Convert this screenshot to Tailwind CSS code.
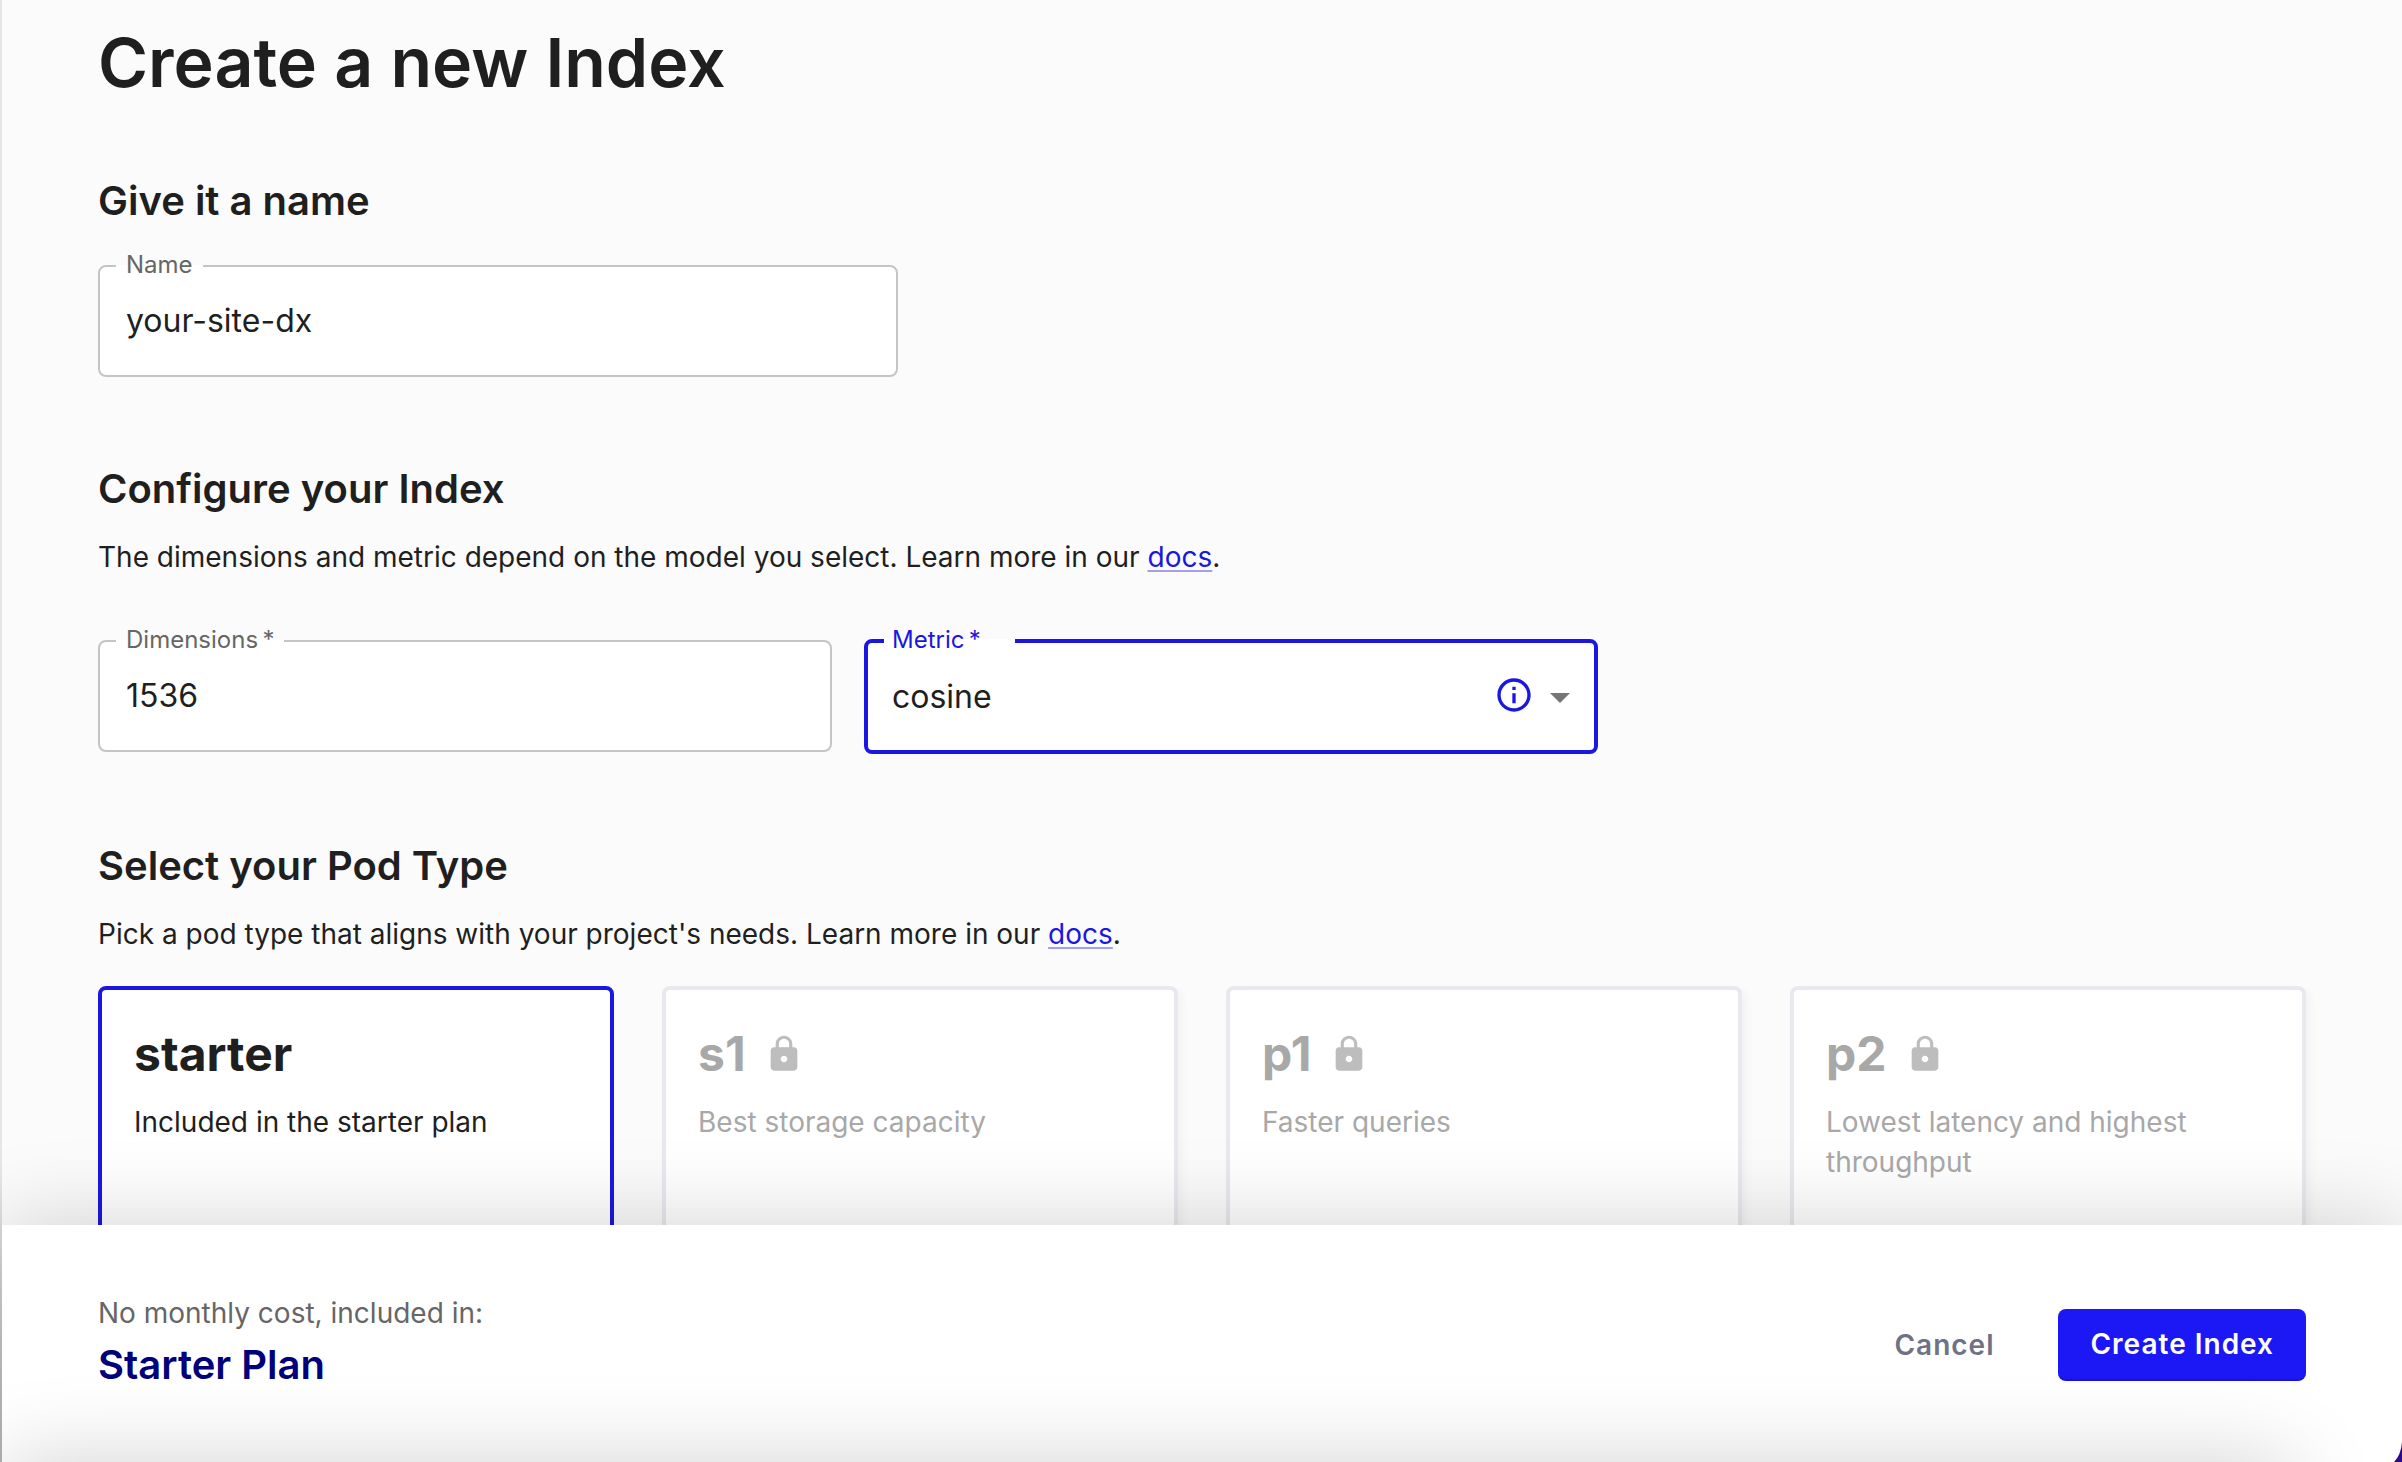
<!DOCTYPE html>
<html lang="en">
<head>
<meta charset="utf-8">
<title>Create a new Index</title>
<script src="https://cdn.jsdelivr.net/npm/@tailwindcss/browser@4"></script>
</head>
<body class="flex h-screen overflow-hidden bg-[#fbfbfb] font-['Inter',sans-serif] text-[28px] leading-10 text-[#1f1f1f]">
  <div class="w-0.5 shrink-0 bg-linear-to-b from-[#e6e6e6] from-80% to-[#b4b4b4]"></div>
  <div class="relative flex min-w-0 flex-1 flex-col">
    <main class="min-h-0 flex-1 overflow-hidden px-24 pt-[22px]">
      <h1 class="text-[68px] leading-20 font-semibold">Create a new Index</h1>

      <section class="mt-[75px]">
        <h2 class="text-[40px] leading-12 font-semibold">Give it a name</h2>
        <fieldset class="mt-[27px] w-[800px] max-w-full rounded-lg border-2 border-[#c4c4c4] bg-white pb-[15px]">
          <legend class="ml-4 px-2.5 pb-0.5 text-2xl leading-[26px] text-[#666]"><label for="name">Name</label></legend>
          <input id="name" type="text" value="your-site-dx" class="block h-20 w-full px-[26px] text-[32px] outline-none">
        </fieldset>
      </section>

      <section class="mt-[88px]">
        <h2 class="text-[40px] leading-12 font-semibold">Configure your Index</h2>
        <p class="mt-6">The dimensions and metric depend on the model you select. Learn more in our <a href="#" class="text-[#1c17e0] underline decoration-[#1c17e0]/40 decoration-2 underline-offset-3">docs</a>.</p>
        <div class="mt-[50px] flex items-start gap-8">
          <fieldset class="w-[734px] rounded-lg border-2 border-[#c4c4c4] bg-white pb-[15px]">
            <legend class="ml-4 px-2.5 pb-0.5 text-2xl leading-[26px] text-[#666]"><label for="dimensions">Dimensions&thinsp;*</label></legend>
            <input id="dimensions" type="text" value="1536" class="block h-20 w-full px-[26px] text-[32px] outline-none">
          </fieldset>
          <fieldset class="w-[734px] rounded-lg border-4 border-[#1c17e0] bg-white pb-[15px]">
            <legend class="ml-4 min-w-[131px] px-2 pb-0.5 text-2xl leading-[26px] text-[#1c17e0]"><label for="metric">Metric&thinsp;*</label></legend>
            <div class="relative">
              <select id="metric" class="block h-20 w-full appearance-none px-6 pt-1 text-[32px] outline-none"><option>cosine</option></select>
              <div class="pointer-events-none absolute inset-y-0 right-2.5 flex items-center gap-0.5">
                <svg class="size-10 text-[#1c17e0]" viewBox="0 0 24 24" fill="currentColor"><path d="M11 7h2v2h-2zm0 4h2v6h-2zm1-9C6.480 2 2 6.480 2 12s4.480 10 10 10 10-4.480 10-10S17.520 2 12 2zm0 18c-4.410 0-8-3.590-8-8s3.590-8 8-8 8 3.590 8 8-3.590 8-8 8z"/></svg>
                <svg class="size-12 text-[#757575]" viewBox="0 0 24 24" fill="currentColor"><path d="M7 11l5 5 5-5z"/></svg>
              </div>
            </div>
          </fieldset>
        </div>
      </section>

      <section class="mt-[88px]">
        <h2 class="text-[40px] leading-12 font-semibold">Select your Pod Type</h2>
        <p class="mt-6">Pick a pod type that aligns with your project's needs. Learn more in our <a href="#" class="text-[#1c17e0] underline decoration-[#1c17e0]/40 decoration-2 underline-offset-3">docs</a>.</p>
        <div class="mt-8 grid grid-cols-4 gap-12">
          <article class="h-80 rounded-lg border-4 border-[#1c17e0] bg-white px-8 pt-9">
            <h3 class="text-5xl leading-14 font-bold">starter</h3>
            <p class="mt-5">Included in the starter plan</p>
          </article>
          <article class="h-80 rounded-lg border-4 border-[#e8e8ee] bg-white px-8 pt-9 text-[#a8a8a8] shadow-[4px_4px_8px_rgba(0,0,0,0.04)]">
            <h3 class="flex items-center gap-[18px] text-5xl leading-14 font-bold">s1
              <svg class="size-10 text-[#bdbdbd]" viewBox="0 0 24 24" fill="currentColor"><path d="M18 8h-1V6c0-2.760-2.240-5-5-5S7 3.240 7 6v2H6c-1.100 0-2 .9-2 2v10c0 1.100.9 2 2 2h12c1.100 0 2-.9 2-2V10c0-1.100-.9-2-2-2zm-6 9c-1.100 0-2-.9-2-2s.9-2 2-2 2 .9 2 2-.9 2-2 2zm3.100-9H8.900V6c0-1.710 1.390-3.100 3.100-3.100s3.100 1.390 3.100 3.100v2z"/></svg>
            </h3>
            <p class="mt-5">Best storage capacity</p>
          </article>
          <article class="h-80 rounded-lg border-4 border-[#e8e8ee] bg-white px-8 pt-9 text-[#a8a8a8] shadow-[4px_4px_8px_rgba(0,0,0,0.04)]">
            <h3 class="flex items-center gap-[18px] text-5xl leading-14 font-bold">p1
              <svg class="size-10 text-[#bdbdbd]" viewBox="0 0 24 24" fill="currentColor"><path d="M18 8h-1V6c0-2.760-2.240-5-5-5S7 3.240 7 6v2H6c-1.100 0-2 .9-2 2v10c0 1.100.9 2 2 2h12c1.100 0 2-.9 2-2V10c0-1.100-.9-2-2-2zm-6 9c-1.100 0-2-.9-2-2s.9-2 2-2 2 .9 2 2-.9 2-2 2zm3.100-9H8.900V6c0-1.710 1.390-3.100 3.100-3.100s3.100 1.390 3.100 3.100v2z"/></svg>
            </h3>
            <p class="mt-5">Faster queries</p>
          </article>
          <article class="h-80 rounded-lg border-4 border-[#e8e8ee] bg-white px-8 pt-9 text-[#a8a8a8] shadow-[4px_4px_8px_rgba(0,0,0,0.04)]">
            <h3 class="flex items-center gap-[18px] text-5xl leading-14 font-bold">p2
              <svg class="size-10 text-[#bdbdbd]" viewBox="0 0 24 24" fill="currentColor"><path d="M18 8h-1V6c0-2.760-2.240-5-5-5S7 3.240 7 6v2H6c-1.100 0-2 .9-2 2v10c0 1.100.9 2 2 2h12c1.100 0 2-.9 2-2V10c0-1.100-.9-2-2-2zm-6 9c-1.100 0-2-.9-2-2s.9-2 2-2 2 .9 2 2-.9 2-2 2zm3.100-9H8.900V6c0-1.710 1.390-3.100 3.100-3.100s3.100 1.390 3.100 3.100v2z"/></svg>
            </h3>
            <p class="mt-5">Lowest latency and highest throughput</p>
          </article>
        </div>
      </section>
    </main>

    <footer class="relative z-10 flex shrink-0 items-start justify-between overflow-hidden bg-white px-24 pt-[68px] pb-[73px] shadow-[0_0_88px_rgba(0,0,0,0.18)]">
      <div>
        <p class="text-[#666]">No monthly cost, included in:</p>
        <p class="mt-2 text-[40px] leading-12 font-semibold text-[#00007c]">Starter Plan</p>
      </div>
      <div class="mt-4 flex items-center gap-8">
        <button type="button" class="h-18 px-8 font-semibold tracking-[1px] text-[#6f7285]">Cancel</button>
        <button type="button" class="h-18 rounded-lg border-b-2 border-[#1813d6] bg-[#1c17f5] px-8 font-semibold tracking-[1px] text-white">Create Index</button>
      </div>
      <!-- shadow cast by the panel below the fold -->
      <div class="absolute top-full right-28 left-0 h-40 shadow-[0_0_88px_rgba(0,0,0,0.18)]"></div>
      <svg class="absolute right-0 bottom-0 h-5 w-2" viewBox="0 0 8 20" fill="#2d0a8c"><path d="M8 0V20H0Q7 13 8 0z"/></svg>
    </footer>
  </div>
</body>
</html>
